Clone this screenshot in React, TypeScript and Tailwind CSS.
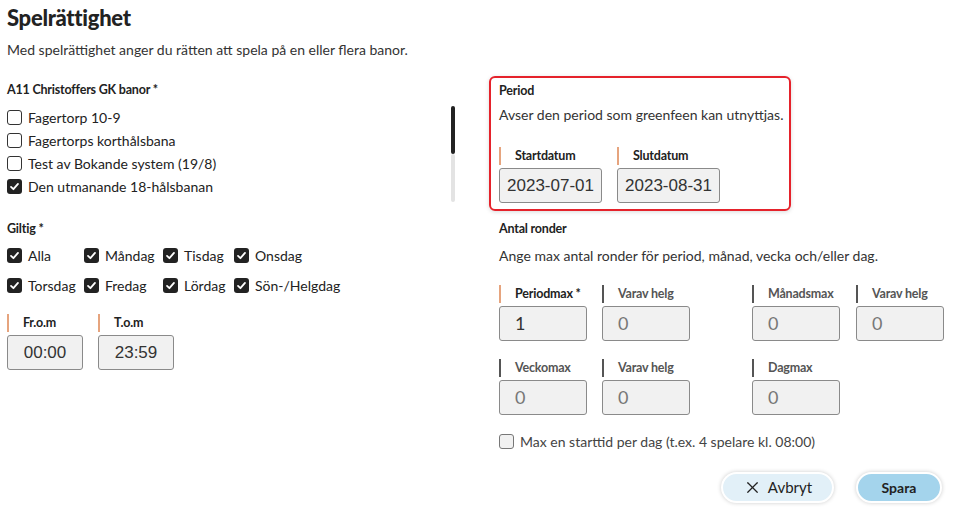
import { X } from "lucide-react";

const body = { fontFamily: "Lato, 'Noto Sans', sans-serif" };

function Box({ checked }: { checked: boolean }) {
  if (checked) {
    return (
      <span className="flex h-[15px] w-[15px] shrink-0 items-center justify-center rounded-[3px] bg-[#222]">
        <svg viewBox="0 0 12 12" className="h-[11px] w-[11px]">
          <path d="M2.2 6.4 4.8 8.9 9.8 3.2" fill="none" stroke="#fff" strokeWidth="2" strokeLinecap="round" strokeLinejoin="round" />
        </svg>
      </span>
    );
  }
  return <span className="h-[15px] w-[15px] shrink-0 rounded-[3px] border border-[#333] bg-white" />;
}

function Check({ label, checked, className = "" }: { label: string; checked: boolean; className?: string }) {
  return (
    <label className={`flex items-center gap-[6px] text-[14px] text-[#222] ${className}`}>
      <Box checked={checked} />
      <span>{label}</span>
    </label>
  );
}

function FieldLabel({ text, accent = false, width }: { text: string; accent?: boolean; width: string }) {
  return (
    <div className={`flex h-[18px] items-stretch ${width}`}>
      <span className={`w-[2px] shrink-0 ${accent ? "bg-[#e6a47e]" : "bg-[#555]"}`} />
      <span
        className={`flex items-center whitespace-nowrap pl-[14px] text-[12.5px] font-bold tracking-[-0.2px] ${
          accent ? "text-[#222]" : "text-[#555]"
        }`}
      >
        {text}
      </span>
    </div>
  );
}

function Field({
  label,
  value,
  accent,
  width,
  mono = true,
  muted = false,
}: {
  label: string;
  value: string;
  accent?: boolean;
  width: string;
  mono?: boolean;
  muted?: boolean;
}) {
  return (
    <div className="flex flex-col gap-[3px]">
      <FieldLabel text={label} accent={accent} width={width} />
      <div
        className={`flex h-[35px] items-center rounded-[3px] border border-[#8a8a8a] bg-[#f1f1f1] ${width} ${
          mono ? "justify-center text-[17px]" : "pl-[15px] text-[18px]"
        } ${muted ? "text-[#777]" : "text-[#333]"}`}
        style={mono ? { fontFamily: "'Liberation Sans', Arial, sans-serif" } : undefined}
      >
        {value}
      </div>
    </div>
  );
}

export default function App() {
  const courses = [
    { label: "Fagertorp 10-9", checked: false },
    { label: "Fagertorps korthålsbana", checked: false },
    { label: "Test av Bokande system (19/8)", checked: false },
    { label: "Den utmanande 18-hålsbanan", checked: true },
  ];

  return (
    <div className="flex h-[511px] w-[960px] bg-white text-[#222]" style={body}>
      {/* Left column */}
      <div className="flex w-[482px] shrink-0 flex-col pl-[7px]">
        <h1 className="mt-[4px] text-[22px] font-black leading-[28px] tracking-[-0.3px]">Spelrättighet</h1>
        <p className="mt-[8px] text-[14px] leading-[20px] text-[#333]">
          Med spelrättighet anger du rätten att spela på en eller flera banor.
        </p>
        <div className="mt-[22px] text-[12.5px] font-bold leading-[16px] tracking-[-0.2px]">
          A11 Christoffers GK banor *
        </div>

        <div className="mt-[8px] flex h-[96px] w-[448px]">
          <div className="flex flex-1 flex-col">
            {courses.map((c) => (
              <Check key={c.label} label={c.label} checked={c.checked} className="h-[23px]" />
            ))}
          </div>
          <div className="flex w-[4px] flex-col">
            <div className="h-[48px] rounded-full bg-[#222]" />
            <div className="flex-1 rounded-full bg-[#e3e3e3]" />
          </div>
        </div>

        <div className="mt-[19px] text-[12.5px] font-bold leading-[16px] tracking-[-0.2px]">Giltig *</div>
        <div className="mt-[8px] grid w-[340px] grid-cols-[77px_79px_71px_1fr] gap-y-[10px]">
          {["Alla", "Måndag", "Tisdag", "Onsdag", "Torsdag", "Fredag", "Lördag", "Sön-/Helgdag"].map((d) => (
            <Check key={d} label={d} checked className="h-[20px]" />
          ))}
        </div>

        <div className="mt-[19px] flex gap-[15px]">
          <Field label="Fr.o.m" value="00:00" accent width="w-[76px]" />
          <Field label="T.o.m" value="23:59" accent width="w-[76px]" />
        </div>
      </div>

      {/* Right column */}
      <div className="flex flex-1 flex-col">
        <div className="ml-[7px] mt-[76px] w-[302px] rounded-[6px] border-2 border-[#e5222b] pb-[6px] pl-[8px] pr-[2px] pt-[5px] shadow-[0_1px_4px_rgba(0,0,0,0.15)]">
          <div className="text-[12.5px] font-bold leading-[16px] tracking-[-0.2px]">Period</div>
          <p className="mt-[6px] whitespace-nowrap text-[14px] leading-[20px] text-[#333]">
            Avser den period som greenfeen kan utnyttjas.
          </p>
          <div className="mt-[22px] flex gap-[15px]">
            <Field label="Startdatum" value="2023-07-01" accent width="w-[103px]" />
            <Field label="Slutdatum" value="2023-08-31" accent width="w-[103px]" />
          </div>
        </div>

        <div className="ml-[17px] flex flex-col">
          <div className="mt-[10px] text-[12.5px] font-bold leading-[16px] tracking-[-0.2px]">Antal ronder</div>
          <p className="mt-[9px] text-[14px] leading-[20px] text-[#333]">
            Ange max antal ronder för period, månad, vecka och/eller dag.
          </p>

          <div className="mt-[19px] grid grid-cols-[103px_150px_104px_88px] gap-y-[18px]">
            <Field label="Periodmax *" value="1" accent width="w-[88px]" mono={false} />
            <Field label="Varav helg" value="0" width="w-[88px]" mono={false} muted />
            <Field label="Månadsmax" value="0" width="w-[88px]" mono={false} muted />
            <Field label="Varav helg" value="0" width="w-[88px]" mono={false} muted />
            <Field label="Veckomax" value="0" width="w-[88px]" mono={false} muted />
            <Field label="Varav helg" value="0" width="w-[88px]" mono={false} muted />
            <Field label="Dagmax" value="0" width="w-[88px]" mono={false} muted />
          </div>

          <label className="mt-[16px] flex items-center gap-[6px] text-[14px] text-[#444]">
            <span className="h-[15px] w-[15px] rounded-[3px] border border-[#777] bg-[#f1f1f1]" />
            <span>Max en starttid per dag (t.ex. 4 spelare kl. 08:00)</span>
          </label>

          <div className="mt-[20px] flex justify-end gap-[22px] pr-[18px]">
            <button
              type="button"
              className="flex h-[31px] w-[113px] items-center justify-center gap-[6px] rounded-full border-2 border-white bg-[#e2f0f8] text-[15px] text-[#222] shadow-[0_0_4px_rgba(0,0,0,0.2)]"
            >
              <X className="h-[19px] w-[19px]" strokeWidth={1.5} />
              Avbryt
            </button>
            <button
              type="button"
              className="flex h-[31px] w-[86px] items-center justify-center rounded-full border-2 border-white bg-[#a4d4ec] text-[14px] font-bold text-[#222] shadow-[0_0_4px_rgba(0,0,0,0.2)]"
            >
              Spara
            </button>
          </div>
        </div>
      </div>
    </div>
  );
}
